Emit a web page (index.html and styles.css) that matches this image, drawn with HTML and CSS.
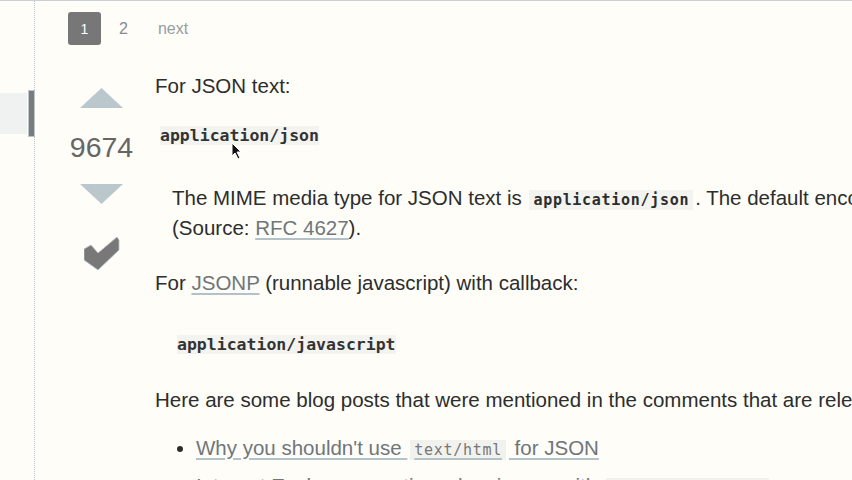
FILE: index.html
```html
<!DOCTYPE html>
<html lang="en">
<head>
<meta charset="utf-8">
<title>Answer</title>
<link rel="stylesheet" href="styles.css">
</head>
<body>
<div class="page">
  <aside class="gutter">
    <div class="marker"><span class="marker-shade"></span><span class="marker-bar"></span></div>
  </aside>
  <main class="main">
    <nav class="pager">
      <span class="page-cur">1</span>
      <a class="page-num">2</a>
      <a class="page-next">next</a>
    </nav>
    <article class="post">
      <div class="votes">
        <svg class="vote-up" width="43" height="20" viewBox="0 0 43 20"><polygon points="21.5,0 43,20 0,20" fill="#bac7cd"/></svg>
        <div class="count">9674</div>
        <svg class="vote-down" width="43" height="20" viewBox="0 0 43 20"><polygon points="0,0 43,0 21.5,20" fill="#bac7cd"/></svg>
        <svg class="accepted" width="36" height="34" viewBox="0 0 36 34"><polygon points="0,12 7,8 14,16 33,0 35,3 35,13 14,33 0,23" fill="#787878" stroke="#b4c2c8" stroke-width="0.8"/></svg>
      </div>
      <div class="content">
        <p class="line">For JSON text:</p>
        <pre class="pre pre-first"><code>application/json</code></pre>
        <blockquote class="quote">The MIME media type for JSON text is <code class="inline">application/json</code>. The default encoding is UTF-8.<br>(Source: <a class="link">RFC 4627</a>).</blockquote>
        <p class="line line-jsonp">For <a class="link">JSONP</a> (runnable javascript) with callback:</p>
        <pre class="pre pre-second"><code>application/javascript</code></pre>
        <p class="line line-blog">Here are some blog posts that were mentioned in the comments that are relevant.</p>
        <ul class="posts">
          <li><a class="link">Why you shouldn't use <code class="link-code">text/html</code> for JSON</a></li>
          <li><a class="link">Internet Explorer sometimes has issues with <code class="link-code">application/json</code></a></li>
        </ul>
      </div>
    </article>
  </main>
</div>
<svg class="cursor" width="12" height="18" viewBox="0 0 12 18"><polygon points="1,1 1,14 4,11 7,17 9,16 6,10 10,10" fill="#111" stroke="#fff" stroke-width="1"/></svg>
</body>
</html>
```
FILE: styles.css
```css
html, body {
  margin: 0;
  padding: 0;
}
body {
  background: #fefdf8;
  width: 852px;
  height: 480px;
  overflow: hidden;
  position: relative;
  font-family: "Liberation Sans", Arial, sans-serif;
  color: #2d2d2d;
  border-top: 1px solid #c6d0d5;
  box-sizing: border-box;
}
.page {
  display: flex;
  height: 100%;
}
.gutter {
  width: 34px;
  flex: none;
  border-right: 1px dotted #b6c4cb;
}
.marker {
  display: flex;
  margin-top: 90px;
  height: 45px;
  gap: 2px;
}
.marker-shade {
  width: 27px;
  margin: 2px 0;
  background: #f0f2f2;
}
.marker-bar {
  width: 5px;
  background: #7b7b7b;
  box-shadow: 0 0 0 1px #b9c6cc;
}
.main {
  flex: 1;
  padding-left: 33px;
  min-width: 0;
}
.pager {
  display: flex;
  align-items: center;
  padding-top: 11px;
  font-size: 16px;
}
.page-cur {
  width: 33px;
  height: 33px;
  border-radius: 3px;
  background: #777;
  color: #fff;
  display: flex;
  align-items: center;
  justify-content: center;
  font-size: 14px;
}
.page-num {
  margin-left: 18px;
  color: #868c90;
}
.page-next {
  margin-left: 30px;
  color: #979ea2;
}
.post {
  display: flex;
  margin-top: 27px;
}
.votes {
  width: 67px;
  flex: none;
  display: flex;
  flex-direction: column;
  align-items: center;
  padding-top: 16px;
}
.count {
  margin-top: 22px;
  font-size: 28.5px;
  line-height: 34px;
  color: #666;
}
.vote-down {
  margin-top: 20px;
}
.accepted {
  margin-top: 33px;
}
.content {
  margin-left: 20px;
  font-size: 20.5px;
  line-height: 28px;
  white-space: nowrap;
}
.line {
  margin: 0;
}
.pre {
  margin: 0;
  font-family: "DejaVu Sans Mono", monospace;
  font-weight: bold;
  font-size: 16.5px;
  line-height: 20px;
  color: #333;
}
.pre code {
  background: #f3f3ef;
}
.pre-first {
  margin-top: 26px;
  margin-left: 5px;
}
.quote {
  margin: 38px 0 0 17px;
}
.inline {
  font-family: "DejaVu Sans Mono", monospace;
  font-weight: bold;
  font-size: 15px;
  letter-spacing: 0.7px;
  background: #f3f3ef;
  padding: 1px 4px;
  margin: 0 2px;
}
.link {
  color: #6f767a;
  text-decoration: underline;
  text-decoration-color: #b3c1c8;
  text-decoration-thickness: 2px;
  text-underline-offset: 3px;
}
.line-jsonp {
  margin-top: 27px;
}
.pre-second {
  margin-top: 38px;
  margin-left: 22px;
}
.line-blog {
  margin-top: 31px;
}
.posts {
  margin: 20px 0 0;
  padding-left: 41px;
}
.posts li + li {
  margin-top: 8px;
}
.link-code {
  font-family: "DejaVu Sans Mono", monospace;
  font-size: 15px;
  letter-spacing: 0.7px;
  background: #f1f2ee;
  padding: 1px 4px;
  margin: 0 3px;
  color: #777;
}
.cursor {
  position: absolute;
  left: 231px;
  top: 141px;
}
```
